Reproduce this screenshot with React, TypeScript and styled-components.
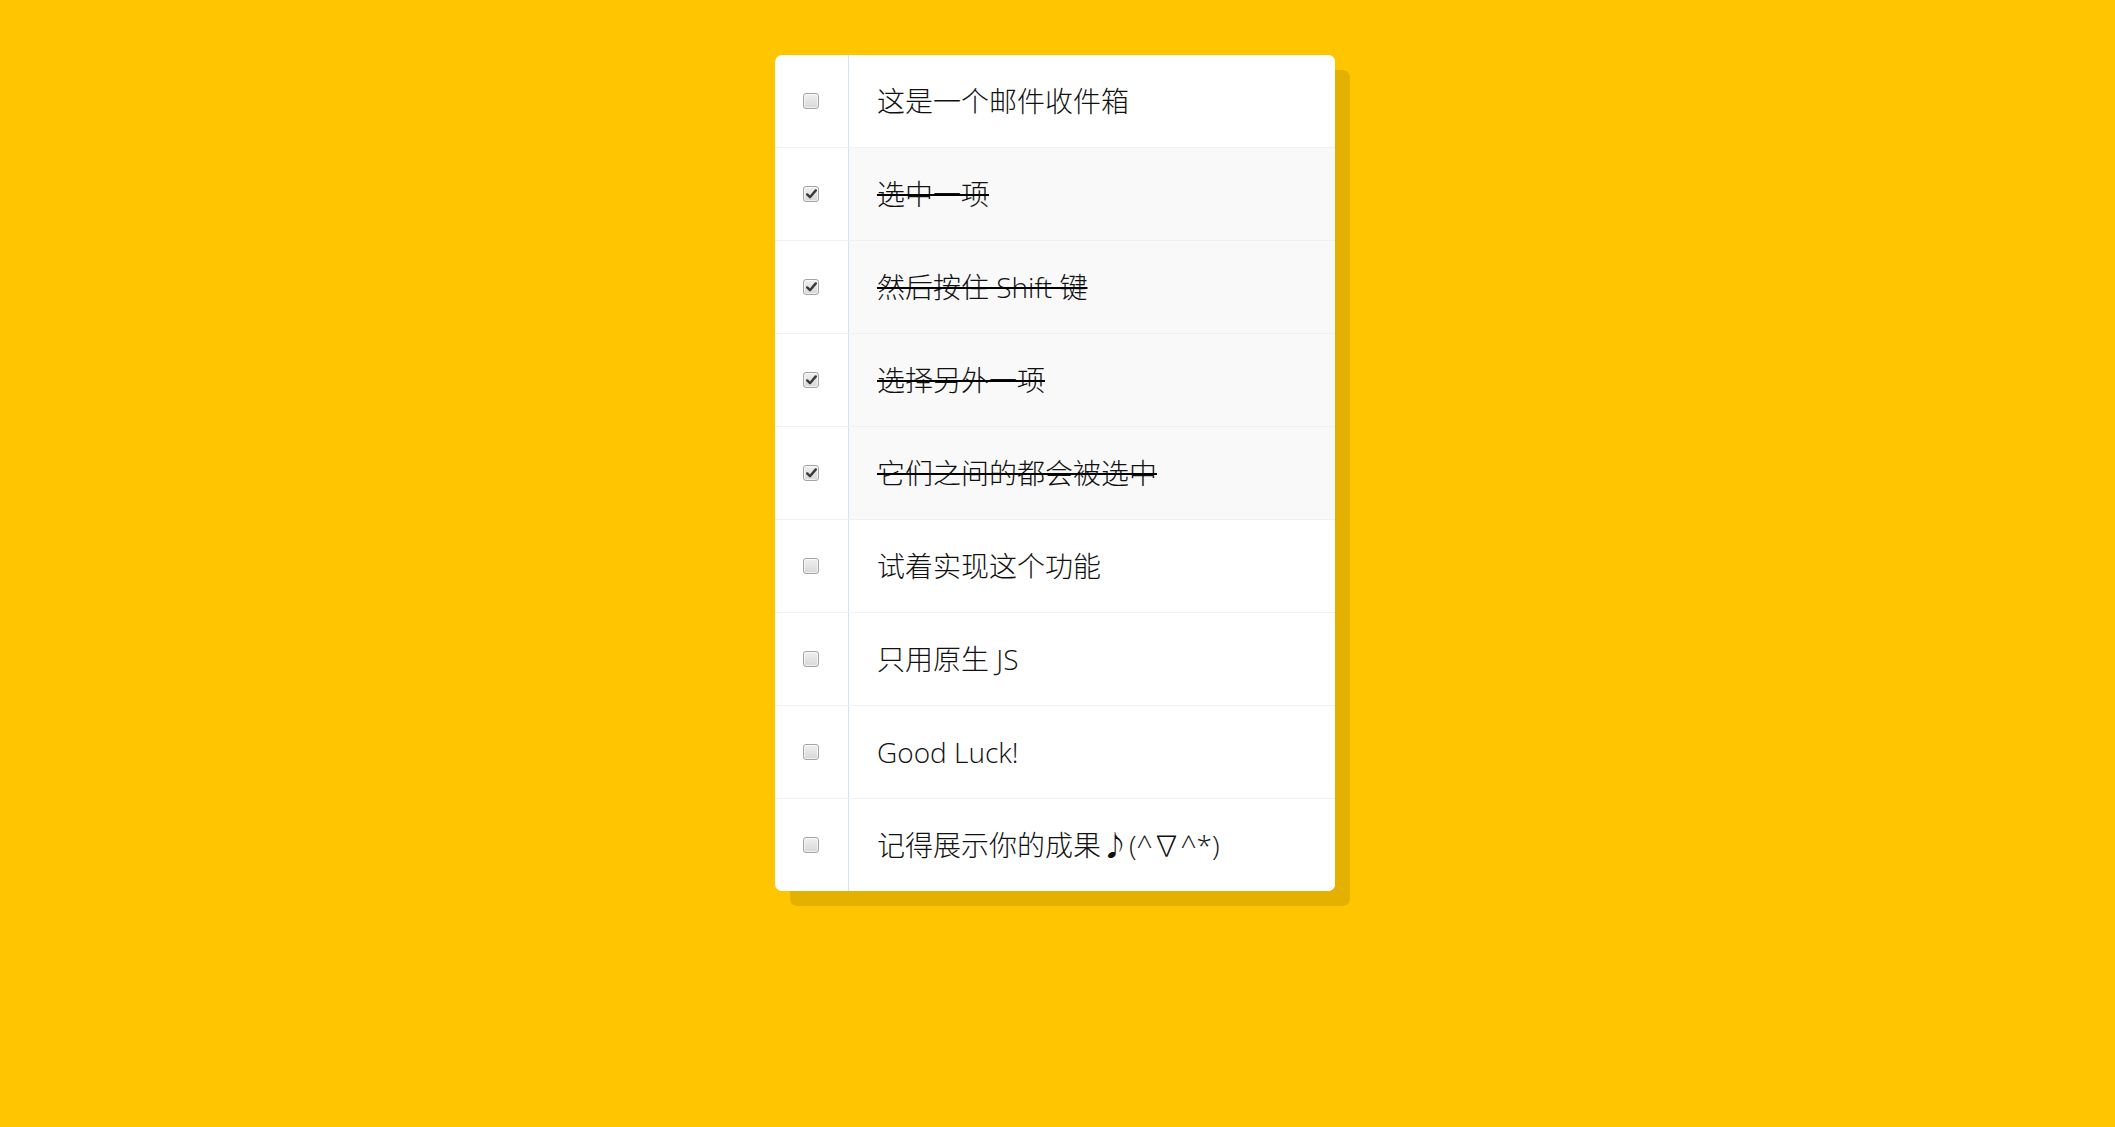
import React, { useState } from 'react';
import styled, { createGlobalStyle } from 'styled-components';

const GlobalStyle = createGlobalStyle`
  html {
    background: #ffc600;
  }
  body {
    margin: 0;
    background: #ffc600;
    font-family: "Open Sans", "Noto Sans CJK SC", sans-serif;
  }
`;

const Page = styled.div`
  min-height: 1127px;
  padding: 55px 5px 0 0;
  box-sizing: border-box;
`;

const Inbox = styled.div`
  width: 560px;
  margin: 0 auto;
  background: #fff;
  border-radius: 7px;
  box-shadow: 15px 15px 0 rgba(0, 0, 0, 0.1);
  overflow: hidden;
`;

const Item = styled.div`
  display: flex;
  align-items: center;
  border-bottom: 1px solid #f1f1f1;
  &:last-child {
    border-bottom: 0;
  }
`;

const Box = styled.span<{ $checked: boolean }>`
  flex: none;
  width: 14px;
  height: 14px;
  margin: 0 29px 0 28px;
  border: 1px solid #a4a4a4;
  border-radius: 3px;
  background: linear-gradient(#f0f0f0, #d8d8d8);
  box-shadow: inset 0 0 0 1px rgba(255, 255, 255, 0.6);
  display: flex;
  align-items: center;
  justify-content: center;
  cursor: pointer;
  svg {
    display: ${(p) => (p.$checked ? 'block' : 'none')};
  }
`;

const Label = styled.p<{ $checked: boolean }>`
  flex: 1;
  margin: 0;
  padding: 28px;
  font-size: 28px;
  line-height: 36px;
  font-weight: 300;
  color: #111;
  border-left: 1px solid #d1e2ff;
  background: ${(p) => (p.$checked ? '#f9f9f9' : '#fff')};
  text-decoration: ${(p) => (p.$checked ? 'line-through' : 'none')};
  text-decoration-thickness: 2px;
  text-decoration-color: #000;
  white-space: nowrap;
`;

const items = [
  { text: '这是一个邮件收件箱', checked: false },
  { text: '选中一项', checked: true },
  { text: '然后按住 Shift 键', checked: true },
  { text: '选择另外一项', checked: true },
  { text: '它们之间的都会被选中', checked: true },
  { text: '试着实现这个功能', checked: false },
  { text: '只用原生 JS', checked: false },
  { text: 'Good Luck!', checked: false },
  { text: '记得展示你的成果♪(^∇^*)', checked: false },
];

const Check = () => (
  <svg width="11" height="10" viewBox="0 0 11 10">
    <path d="M1.2 5.4 L4 8.2 L9.8 1.4" fill="none" stroke="#3a3a3a" strokeWidth="2.4" strokeLinecap="round" strokeLinejoin="round" />
  </svg>
);

export default function App() {
  const [checks, setChecks] = useState(items.map((i) => i.checked));
  const [last, setLast] = useState<number | null>(null);

  const toggle = (index: number, shift: boolean) => {
    const next = [...checks];
    const value = !next[index];
    next[index] = value;
    if (shift && last !== null && value) {
      const from = Math.min(last, index);
      const to = Math.max(last, index);
      for (let i = from; i <= to; i++) next[i] = true;
    }
    setChecks(next);
    if (value) setLast(index);
  };

  return (
    <Page>
      <GlobalStyle />
      <Inbox>
        {items.map((item, index) => (
          <Item key={index}>
            <Box
              $checked={checks[index]}
              role="checkbox"
              aria-checked={checks[index]}
              onClick={(e) => toggle(index, e.shiftKey)}
            >
              <Check />
            </Box>
            <Label $checked={checks[index]}>{item.text}</Label>
          </Item>
        ))}
      </Inbox>
    </Page>
  );
}
